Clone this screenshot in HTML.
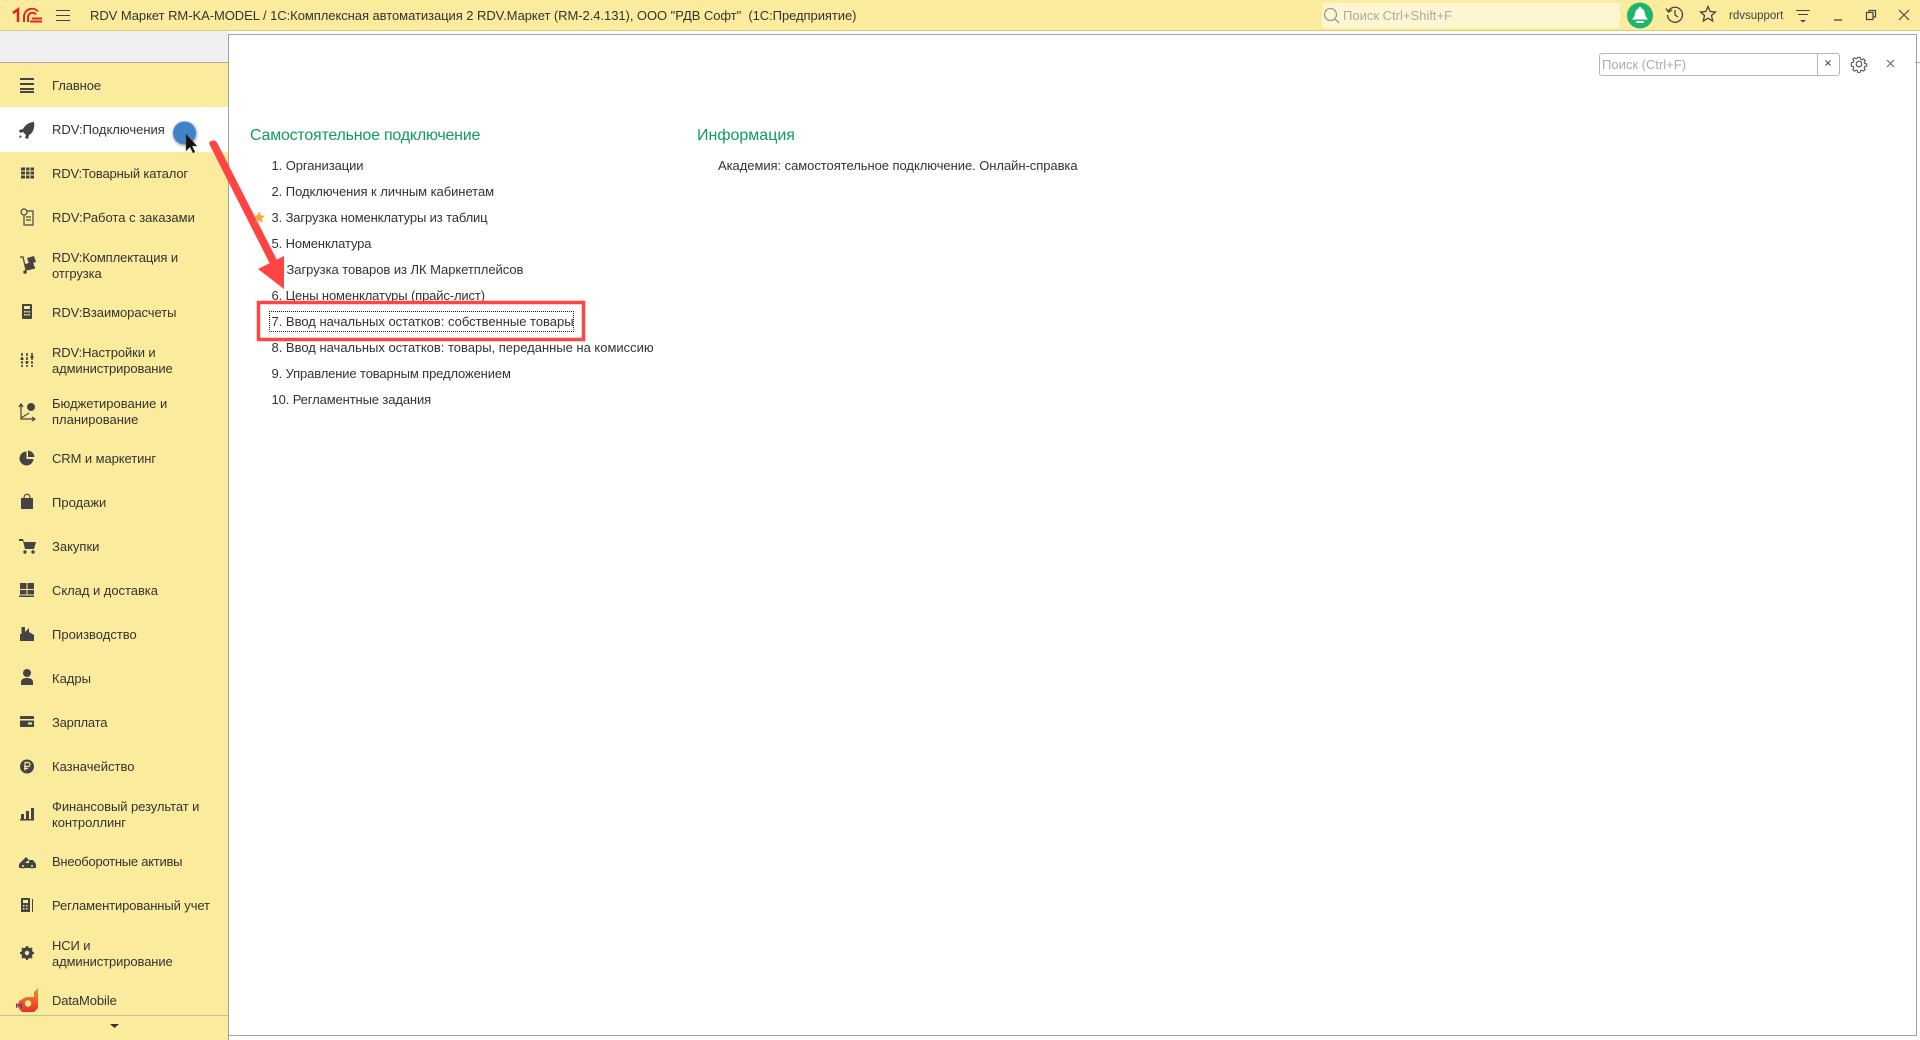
<!DOCTYPE html>
<html lang="ru"><head><meta charset="utf-8"><title>1С</title>
<style>
html,body{margin:0;padding:0;background:#fff}
body{width:1920px;height:1040px;position:relative;overflow:hidden;font-family:"Liberation Sans",Arial,sans-serif;font-size:13px;color:#333}
.a{position:absolute;white-space:nowrap}
#hdr{left:0;top:0;width:1920px;height:30px;background:#fbec9d;border-bottom:1px solid #d9cd7c}
#strip{left:0;top:31px;width:228px;height:31px;background:#f0f0f0;border-bottom:1px solid #aaa}
#side{left:0;top:63px;width:228px;height:977px;background:#fbec9d;border-right:1px solid #999}
#panel{left:228px;top:34px;width:1687px;height:1000px;background:#fff;border:solid #a0a0a0;border-width:1px 1px 1px 1px}
.r{position:absolute;left:52px;line-height:16px;white-space:nowrap;transform:translateY(-50%);color:#333}
.l{position:absolute;left:271.5px;line-height:16px;white-space:nowrap;transform:translateY(-50%);color:#333}
.h{position:absolute;font-size:16px;line-height:20px;color:#0e9e5c;white-space:nowrap;transform:translateY(-50%)}
svg{position:absolute}
</style></head><body>
<div class="a" id="hdr"></div>
<svg style="left:0;top:0" width="50" height="30" fill="none" stroke="#d92b20" stroke-width="2"><path d="M13 13l5-3.500V22" stroke-width="2.600"/><path d="M24 22v-6a8 8 0 0 1 14-4.500M28 22v-5a4.500 4.500 0 0 1 8-2.500"/><path d="M32 18.500h10M30 21.500h12"/></svg>
<svg style="left:55px;top:8px" width="16" height="15" stroke="#444" stroke-width="1.100"><path d="M1 2.500h14M1 7.500h14M1 12.500h14"/></svg>
<div class="a" style="left:90px;top:8px;line-height:16px;letter-spacing:-.055px">RDV Маркет RM-KA-MODEL / 1С:Комплексная автоматизация 2 RDV.Маркет (RM-2.4.131), ООО "РДВ Софт"&nbsp; (1С:Предприятие)</div>
<div class="a" style="left:1322px;top:3px;width:298px;height:25px;background:#fdf6d0;border-radius:2px"></div>
<svg style="left:1323px;top:7px" width="17" height="17" fill="none" stroke="#999" stroke-width="1.300"><circle cx="7.500" cy="7.500" r="6"/><path d="M12 12l4 4"/></svg>
<div class="a" style="left:1343px;top:8px;line-height:16px;color:#aaa">Поиск Ctrl+Shift+F</div>
<svg style="left:1626px;top:2px" width="28" height="27"><circle cx="14" cy="13.500" r="13" fill="#1fb56b"/><path d="M14 5c-1 0-1.500.7-1.500 1.500C10 7.500 9.500 9.500 9 12c-.5 2.500-2 4-3 5.500h16c-1-1.500-2.500-3-3-5.500-.5-2.500-1-4.500-3.500-5.500C15.500 5.700 15 5 14 5z" fill="#fff"/><rect x="10" y="19" width="8" height="2" rx="1" fill="#fff"/></svg>
<svg style="left:1665px;top:5px" width="20" height="20" fill="none" stroke="#444" stroke-width="1.300"><path d="M3.500 6A7.500 7.500 0 1 1 2.500 10"/><path d="M1 3.500 3.500 7 7 5"/><path d="M10 5v5l3 2"/></svg>
<svg style="left:1699px;top:5px" width="18" height="18" fill="none" stroke="#444" stroke-width="1.300"><path d="M9 1.500 11.200 6.500 16.500 7 12.500 10.500 13.700 16 9 13.200 4.300 16 5.500 10.500 1.500 7 6.800 6.500z"/></svg>
<div class="a" style="left:1729px;top:8px;line-height:16px;font-size:11.500px;color:#3f3f4f">rdvsupport</div>
<svg style="left:1795px;top:8px" width="16" height="16" stroke="#444" stroke-width="1.100"><path d="M1 2.500h14M3 6.500h10"/><path d="M5 12h6L8 14.500z" fill="#444" stroke="none"/></svg>
<svg style="left:1832px;top:18px" width="12" height="4" stroke="#444" stroke-width="1.300"><path d="M2 2h8"/></svg>
<svg style="left:1865px;top:9px" width="12" height="12" fill="none" stroke="#444" stroke-width="1.200"><path d="M1.500 3.500h6.500v7H1.500zM4 3.500V1.500h6.500V8H8"/></svg>
<svg style="left:1898px;top:9px" width="12" height="12" stroke="#444" stroke-width="1.100"><path d="M1 1l10 10M11 1 1 11"/></svg>

<div class="a" id="strip"></div>
<div class="a" id="side"></div>
<div class="a" id="panel"></div>
<div class="a" style="left:1915px;top:62px;width:5px;height:1px;background:#aaa"></div>
<div class="a" style="left:0;top:107px;width:228px;height:45px;background:#fff"></div>
<div class="a" style="left:0;top:1015px;width:228px;height:1px;background:#c9c08a"></div>

<div class="r" style="top:86px;letter-spacing:-.1px">Главное</div>
<div class="r" style="top:130px">RDV:Подключения</div>
<div class="r" style="top:174px;letter-spacing:-.15px">RDV:Товарный каталог</div>
<div class="r" style="top:218px">RDV:Работа с заказами</div>
<div class="r" style="top:266px;letter-spacing:-.09px">RDV:Комплектация и<br>отгрузка</div>
<div class="r" style="top:313px;letter-spacing:-.07px">RDV:Взаиморасчеты</div>
<div class="r" style="top:361px;letter-spacing:-.11px">RDV:Настройки и<br>администрирование</div>
<div class="r" style="top:412px">Бюджетирование и<br>планирование</div>
<div class="r" style="top:459px;letter-spacing:-.08px">CRM и маркетинг</div>
<div class="r" style="top:503px">Продажи</div>
<div class="r" style="top:547px">Закупки</div>
<div class="r" style="top:591px;letter-spacing:-.04px">Склад и доставка</div>
<div class="r" style="top:635px">Производство</div>
<div class="r" style="top:679px">Кадры</div>
<div class="r" style="top:723px;letter-spacing:-.2px">Зарплата</div>
<div class="r" style="top:767px">Казначейство</div>
<div class="r" style="top:815px;letter-spacing:-.07px">Финансовый результат и<br>контроллинг</div>
<div class="r" style="top:862px;letter-spacing:-.25px">Внеоборотные активы</div>
<div class="r" style="top:906px;letter-spacing:-.1px">Регламентированный учет</div>
<div class="r" style="top:954px;letter-spacing:-.11px">НСИ и<br>администрирование</div>
<div class="r" style="top:1001px;letter-spacing:-.1px">DataMobile</div>

<svg style="left:0;top:0;pointer-events:none" width="228" height="1040" fill="#444">
<path d="M20 78h14v2H20zM20 83h14v2H20zM20 88h14v2H20zM20 93h14v-2H20z"/>
<path d="M34 122c-5 0-9 3-11 7l-4 1 1 3 3-1 3 3-1 3 3 1 1-4c4-2 6-7 5-13zM20 135l-1 3 3-1z"/>
<path d="M21 167.500h13v3H21zM21 171.500h13v3H21zM21 175.500h13v3H21z"/><path d="M25.500 167v12M30 167v12" stroke="#fbec9d" stroke-width="1"/>
<g fill="none" stroke="#444" stroke-width="1.200"><circle cx="24" cy="212" r="3"/><path d="M27 211h6v14h-9v-10M26 217h5M26 220h5"/></g>
<path d="M27 258l7-2 2 6-7 2zM25 264l8-2 2 6-8 2z"/><path d="M20 257h3l3 13 9-2" fill="none" stroke="#444" stroke-width="1.300"/><circle cx="25" cy="272" r="1.800"/>
<path d="M23 304h8a1 1 0 0 1 1 1v13a1 1 0 0 1-1 1h-8a1 1 0 0 1-1-1v-13a1 1 0 0 1 1-1z"/><path d="M24 306h6v3h-6z" fill="#fbec9d"/><path d="M24 311h1.500v1.500H24zM26.300 311h1.500v1.500h-1.500zM28.600 311h1.500v1.500h-1.500zM24 314h1.500v1.500H24zM26.300 314h1.500v1.500h-1.500zM28.600 314h1.500v1.500h-1.500z" fill="#fbec9d"/>
<g stroke="#444" fill="none" stroke-width="1.600" stroke-dasharray="3 1"><path d="M22 353v14M27 353v14M32 353v14"/></g><path d="M20.500 358h3v2h-3zM25.500 361h3v2h-3zM30.500 356h3v2h-3z"/>
<g fill="none" stroke="#444" stroke-width="1.200"><path d="M21 404v15h13M21 418l8-5"/><path d="M19 407l2-3 2 3M32 417l3 2-3 2"/></g><circle cx="31" cy="407" r="4"/>
<path d="M26.500 451.500v7.500h7a7 7 0 1 1-7-7.500zM28 450.500a7 7 0 0 1 6.500 6.500H28z"/>
<path d="M21 498h12v11H21z"/><path d="M24 498c0-5 6-5 6 0" fill="none" stroke="#444" stroke-width="1.200"/>
<path d="M19 539h4l1 3h12l-2 7H25l-2-8h-4z"/><circle cx="25" cy="552" r="1.700"/><circle cx="33" cy="552" r="1.700"/>
<path d="M20 583h6.500v6H20zM27.500 583h6.500v6h-6.500zM20 590h6.500v4.500H20zM27.500 590h6.500v4.500h-6.500zM19 595.500h15V597H19z"/>
<path d="M20 641v-7l1.500 0v-7h3.500v5l4-4v4l5 3v6z"/>
<circle cx="27" cy="673" r="4"/><path d="M21 685v-3c0-3 3-4 6-4s6 1 6 4v3z"/>
<path d="M21 716h12a1 1 0 0 1 1 1v2H20v-2a1 1 0 0 1 1-1zM20 720.500h14v6.500H20zM28 722.500v2h4v-2z" fill-rule="evenodd"/>
<circle cx="27" cy="766.500" r="7"/><path d="M25 770.500v-8h3a2 2 0 0 1 0 4h-4M24 768.500h4" stroke="#fbec9d" stroke-width="1.200" fill="none"/>
<path d="M21 814h3v6h-3zM26 811h3v9h-3zM31 808h3v12h-3zM20 819h14v1.500H20z"/>
<path d="M19 864l7-7 3 3-4 3h4v-3h4l3 4v4H19z"/><circle cx="23" cy="866" r="2.500"/><circle cx="32" cy="866" r="2.500"/><circle cx="23" cy="866" r="1" fill="#fbec9d"/><circle cx="32" cy="866" r="1" fill="#fbec9d"/>
<path d="M21 898h9v14h-9zM32 899h1v13h-1z"/><path d="M23 900h5v3h-5zM23 905h1.500v1.500H23zM26 905h1.500v1.500H26zM23 908h1.500v1.500H23zM26 908h1.500v1.500H26z" fill="#fbec9d"/>
<circle cx="27" cy="953" r="4.200" fill="none" stroke="#444" stroke-width="3.200"/><path d="M27 946v14M20 953h14M22 948l10 10M32 948l-10 10" stroke="#444" stroke-width="2"/><circle cx="27" cy="953" r="2.200" fill="#fbec9d"/>
<path d="M110 1024h9l-4.500 4z" fill="#333"/>
</svg>
<svg style="left:14px;top:987px" width="26" height="27"><defs><linearGradient id="g" x1="0" y1="0" x2="0" y2="1"><stop offset="0" stop-color="#f7941d"/><stop offset="1" stop-color="#e8312a"/></linearGradient></defs><path d="M24 1l-4 4v5h-8L5 14 3 19l5 6h12l4-4z" fill="url(#g)"/><circle cx="14" cy="16.500" r="3.200" fill="#fbec9d"/><path d="M2.500 21v-4l3 2 2-2v4" fill="none" stroke="#6b3a8c" stroke-width="1"/></svg>

<div class="h" style="left:250px;top:136px;letter-spacing:-.22px">Самостоятельное подключение</div>
<div class="h" style="left:697px;top:136px">Информация</div>
<div class="l" style="left:718px;top:166px;letter-spacing:-.05px">Академия: самостоятельное подключение. Онлайн-справка</div>
<div class="l" style="top:166px;letter-spacing:-.08px">1. Организации</div>
<div class="l" style="top:192px;letter-spacing:-.05px">2. Подключения к личным кабинетам</div>
<div class="l" style="top:218px;letter-spacing:-.13px">3. Загрузка номенклатуры из таблиц</div>
<div class="l" style="top:244px;letter-spacing:-.12px">5. Номенклатура</div>
<div class="l" style="top:270px;left:286.500px;letter-spacing:-.05px">Загрузка товаров из ЛК Маркетплейсов</div>
<div class="l" style="top:296px;letter-spacing:-.13px">6. Цены номенклатуры (прайс-лист)</div>
<div class="l" style="top:322px;letter-spacing:-.01px">7. Ввод начальных остатков: собственные товары</div>
<div class="l" style="top:348px;letter-spacing:-.01px">8. Ввод начальных остатков: товары, переданные на комиссию</div>
<div class="l" style="top:374px;letter-spacing:-.13px">9. Управление товарным предложением</div>
<div class="l" style="top:400px;letter-spacing:-.12px">10. Регламентные задания</div>
<div class="a" style="left:269px;top:311px;width:303px;height:19px;border:1px dotted #222"></div>

<div class="a" style="left:1599px;top:53px;width:239px;height:21px;border:1px solid #b5b5b5;border-radius:3px;background:#fff"></div>
<div class="a" style="left:1817px;top:53px;width:1px;height:23px;background:#b5b5b5"></div>
<div class="a" style="left:1602px;top:57px;line-height:16px;color:#aaa">Поиск (Ctrl+F)</div>
<svg style="left:1824px;top:59px" width="9" height="9" stroke="#555" stroke-width="1.200"><path d="M1.500 1.500l5 5M6.500 1.500l-5 5"/></svg>
<svg style="left:1850px;top:55px" width="18" height="18" viewBox="0 0 18 18" fill="none" stroke="#555" stroke-width="1.200"><circle cx="9" cy="9" r="2.800"/><path d="M7.700 1.500h2.600l.4 2.200 1.500.7 1.900-1.200 1.800 1.800-1.200 1.900.7 1.500 2.200.4v2.600l-2.200.4-.7 1.500 1.200 1.900-1.800 1.800-1.900-1.200-1.500.7-.4 2.200H7.700l-.4-2.200-1.500-.7-1.900 1.200-1.800-1.800 1.200-1.900-.7-1.500-2.200-.4V7.600l2.200-.4.700-1.500L2.100 3.800l1.800-1.800 1.900 1.200 1.500-.7z" transform="translate(.9 .9) scale(.9)"/></svg>
<svg style="left:1886px;top:59px" width="9" height="9" stroke="#666" stroke-width="1.100"><path d="M1 1l7 7M8 1 1 8"/></svg>

<svg style="left:0;top:0;pointer-events:none" width="700" height="400">
<defs><filter id="s" x="-30%" y="-30%" width="170%" height="170%"><feGaussianBlur stdDeviation="1.500"/></filter></defs>
<path d="M209 143.500C209.500 140.500 215 139 217 142.500L278 262 272 268z" fill="#ff4444"/>
<path d="M284 256V289L258 269z" fill="#ff4444"/>
<rect x="258.500" y="302.500" width="325" height="37" fill="none" stroke="#ff4444" stroke-width="3.500"/>
<path d="M259 211.500l1.800 3.900 4.200.4-3.200 2.800 1 4.200-3.800-2.200-3.800 2.200 1-4.200-3.200-2.800 4.200-.4z" fill="#f8a838"/>
<circle cx="185" cy="134" r="12" fill="#333" opacity=".45" filter="url(#s)"/>
<circle cx="184.500" cy="133" r="11.500" fill="#3f84c8"/>
<path d="M186 134v17l4-4 3 6 2-1-3-6h5z" fill="#111" stroke="#555" stroke-width=".5"/>
</svg>
</body></html>
